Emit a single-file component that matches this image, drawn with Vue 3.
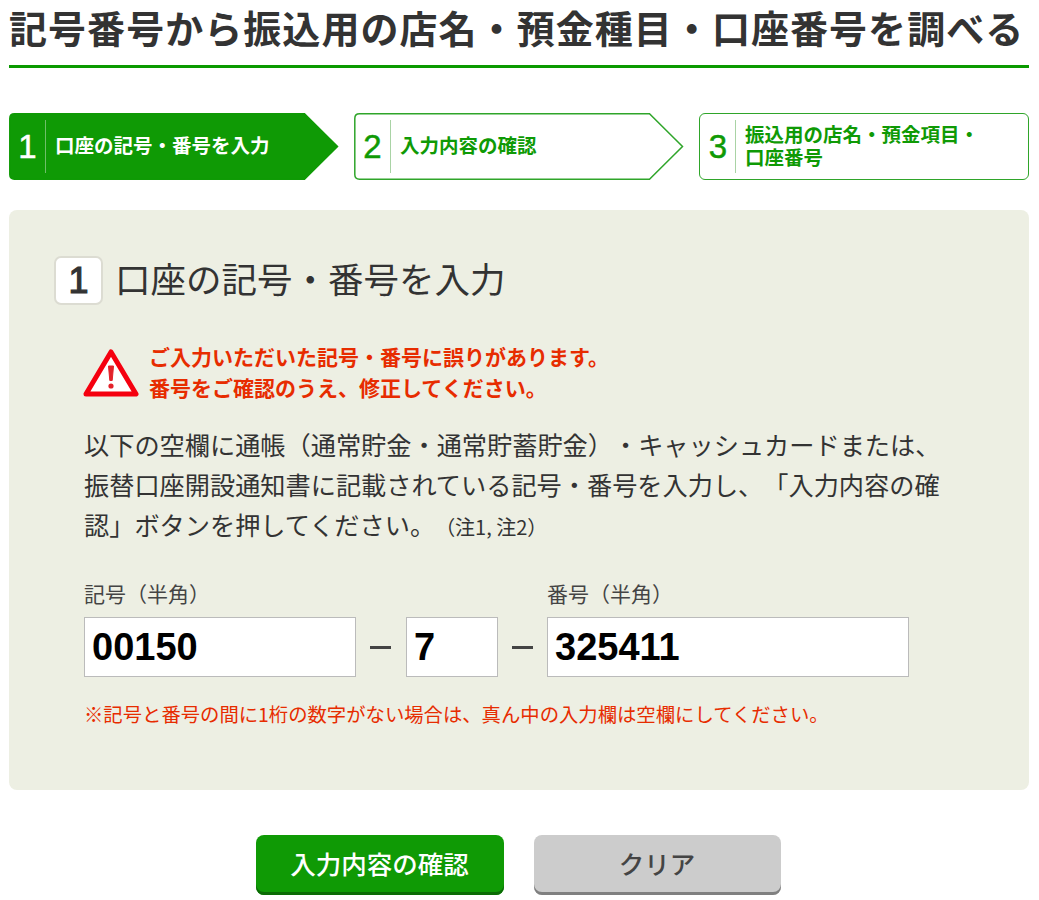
<template>
  <div class="page">
    <h1 class="title">記号番号から振込用の店名・預金種目・口座番号を調べる</h1>

    <ol class="steps">
      <li v-for="s in steps" :key="s.no" class="step" :class="{ current: s.no === 1, last: s.no === 3 }">
        <svg v-if="s.no < 3" class="step-shape" width="330" height="67" viewBox="0 0 330 67">
          <path d="M5.5 .8H295.5L328.5 33.5L295.5 66.2H5.5Q.8 66.2 .8 61.5V5.5Q.8 .8 5.5 .8Z" />
        </svg>
        <span class="step-no">{{ s.no }}</span>
        <span class="step-text">
          <span v-for="line in s.lines" :key="line" class="step-line">{{ line }}</span>
        </span>
      </li>
    </ol>

    <section class="panel">
      <div class="panel-head">
        <span class="badge">1</span>
        <h2 class="panel-title">口座の記号・番号を入力</h2>
      </div>

      <div class="error">
        <svg class="error-icon" width="56" height="50" viewBox="0 0 56 50">
          <path d="M28 4L53 46H3Z" fill="#fff" stroke="#f5000f" stroke-width="5" stroke-linejoin="round" />
          <path d="M25.5 18H30.5L29.2 32.5H26.8Z" fill="#e3222a" stroke="#e3222a" stroke-linejoin="round" />
          <circle cx="28" cy="38" r="2.6" fill="#e3222a" />
        </svg>
        <p class="error-text">ご入力いただいた記号・番号に誤りがあります。<br />番号をご確認のうえ、修正してください。</p>
      </div>

      <p class="lead">以下の空欄に通帳（通常貯金・通常貯蓄貯金）・キャッシュカードまたは、振替口座開設通知書に記載されている記号・番号を入力し、「入力内容の確認」ボタンを押してください。<small class="note">（注1, 注2）</small></p>

      <div class="fields">
        <div class="field field-a">
          <label class="field-label">記号（半角）</label>
          <input class="field-input" type="text" value="00150" />
        </div>
        <span class="dash"></span>
        <div class="field field-b">
          <input class="field-input" type="text" value="7" />
        </div>
        <span class="dash dash-narrow"></span>
        <div class="field field-c">
          <label class="field-label">番号（半角）</label>
          <input class="field-input" type="text" value="325411" />
        </div>
      </div>

      <p class="hint">※記号と番号の間に1桁の数字がない場合は、真ん中の入力欄は空欄にしてください。</p>
    </section>

    <div class="actions">
      <button class="btn btn-primary" type="button">入力内容の確認</button>
      <button class="btn btn-clear" type="button">クリア</button>
    </div>
  </div>
</template>

<script setup>
const steps = [
  { no: 1, lines: ['口座の記号・番号を入力'] },
  { no: 2, lines: ['入力内容の確認'] },
  { no: 3, lines: ['振込用の店名・預金項目・', '口座番号'] },
];
</script>

<style>
html, body { background: #fff; }
</style>

<style scoped>
.page {
  width: 1020px;
  margin-left: 9px;
  font-family: "Noto Sans CJK JP", "Noto Sans", sans-serif;
  color: #333;
  text-spacing-trim: space-all;
}
.title {
  margin: 0;
  height: 68px;
  box-sizing: border-box;
  border-bottom: 3px solid #0a9a00;
  font-size: 38px;
  font-weight: 700;
  line-height: 54px;
  letter-spacing: 1.05px;
  white-space: nowrap;
}
.steps {
  display: flex;
  gap: 15px;
  margin: 45px 0 0;
  padding: 0;
  list-style: none;
}
.step {
  position: relative;
  box-sizing: border-box;
  display: flex;
  align-items: center;
  width: 330px;
  height: 67px;
  padding: 7px 0;
  color: #0f9a05;
}
.step.last {
  border: 1.5px solid #2fa52a;
  border-radius: 6px;
  padding: 6px 0;
}
.step-shape {
  position: absolute;
  left: 0;
  top: 0;
}
.step-shape path {
  fill: #fff;
  stroke: #2fa52a;
  stroke-width: 1.5;
}
.current .step-shape path {
  fill: #0f9a05;
  stroke: #0f9a05;
}
.step-no {
  position: relative;
  box-sizing: border-box;
  width: 37px;
  height: 53px;
  padding-left: 1px;
  border-right: 1px solid #a9d3a5;
  font-family: "Liberation Sans", sans-serif;
  font-size: 33px;
  -webkit-text-stroke: 0.5px currentColor;
  line-height: 53px;
  text-align: center;
}
.last .step-no { width: 36px; }
.step-text {
  position: relative;
  top: -2px;
  margin-left: 9px;
  font-size: 19.5px;
  font-weight: 700;
  line-height: 23px;
}
.step-line { display: block; white-space: nowrap; }
.current { color: #fff; }
.current .step-no { border-right-color: #6fbf69; }

.panel {
  box-sizing: border-box;
  height: 580px;
  margin-top: 30px;
  padding: 46px 75px 0;
  background: #edefe3;
  border-radius: 8px;
}
.panel-head {
  display: flex;
  align-items: center;
  gap: 12px;
  margin-left: -30px;
}
.badge {
  box-sizing: border-box;
  width: 49px;
  height: 49px;
  border: 2px solid #dcdcd2;
  border-radius: 7px;
  background: #fff;
  font-family: "Liberation Sans", sans-serif;
  font-size: 36px;
  -webkit-text-stroke: 1.2px currentColor;
  line-height: 45px;
  text-align: center;
}
.panel-title {
  position: relative;
  top: -3px;
  margin: 0;
  font-size: 35.5px;
  font-weight: 400;
  line-height: 48px;
  white-space: nowrap;
}
.error {
  display: flex;
  align-items: center;
  gap: 11px;
  margin-top: 37px;
}
.error-icon { margin-left: -1px; }
.error-text {
  margin: 0;
  position: relative;
  top: -1px;
  left: -1px;
  color: #e72c00;
  font-size: 21px;
  font-weight: 700;
  line-height: 31px;
  white-space: nowrap;
}
.lead {
  width: 860px;
  margin: 20px 0 0;
  font-size: 25.2px;
  line-height: 40px;
}
.note { font-size: 20px; }
.fields {
  display: flex;
  align-items: flex-end;
  margin-top: 31px;
}
.field { display: flex; flex-direction: column; }
.field-a { width: 272px; }
.field-b { width: 92px; }
.field-c { width: 362px; }
.field-label {
  margin-bottom: 9px;
  font-size: 21px;
  line-height: 30px;
  color: #444;
  white-space: nowrap;
}
.field-input {
  box-sizing: border-box;
  width: 100%;
  height: 60px;
  padding: 0 7px;
  border: 1px solid #bbb;
  border-radius: 0;
  background: #fff;
  color: #000;
  font-family: "Liberation Sans", sans-serif;
  font-size: 38px;
  font-weight: 700;
  outline: none;
}
.dash {
  position: relative;
  width: 50px;
  height: 60px;
}
.dash-narrow { width: 49px; }
.dash::after {
  content: "";
  position: absolute;
  left: 14px;
  top: 29px;
  width: 21px;
  height: 3px;
  background: #444;
}
.hint {
  margin: 22px 0 0;
  color: #e72c00;
  font-size: 19.35px;
  line-height: 30px;
  white-space: nowrap;
}
.actions {
  display: flex;
  justify-content: center;
  gap: 30px;
  margin-top: 45px;
  padding-right: 2px;
}
.btn {
  box-sizing: border-box;
  width: 248px;
  height: 60px;
  padding: 0 0 5px;
  border: 0;
  border-radius: 8px;
  font-family: inherit;
  font-size: 25.5px;
  font-weight: 500;
}
.btn-clear { width: 247px; }
.btn-primary {
  background: #0f9a05;
  color: #fff;
  box-shadow: inset 0 -3px 0 #0b6b05;
}
.btn-clear {
  background: #cccccc;
  color: #444;
  box-shadow: inset 0 -3px 0 #808080;
}
</style>
